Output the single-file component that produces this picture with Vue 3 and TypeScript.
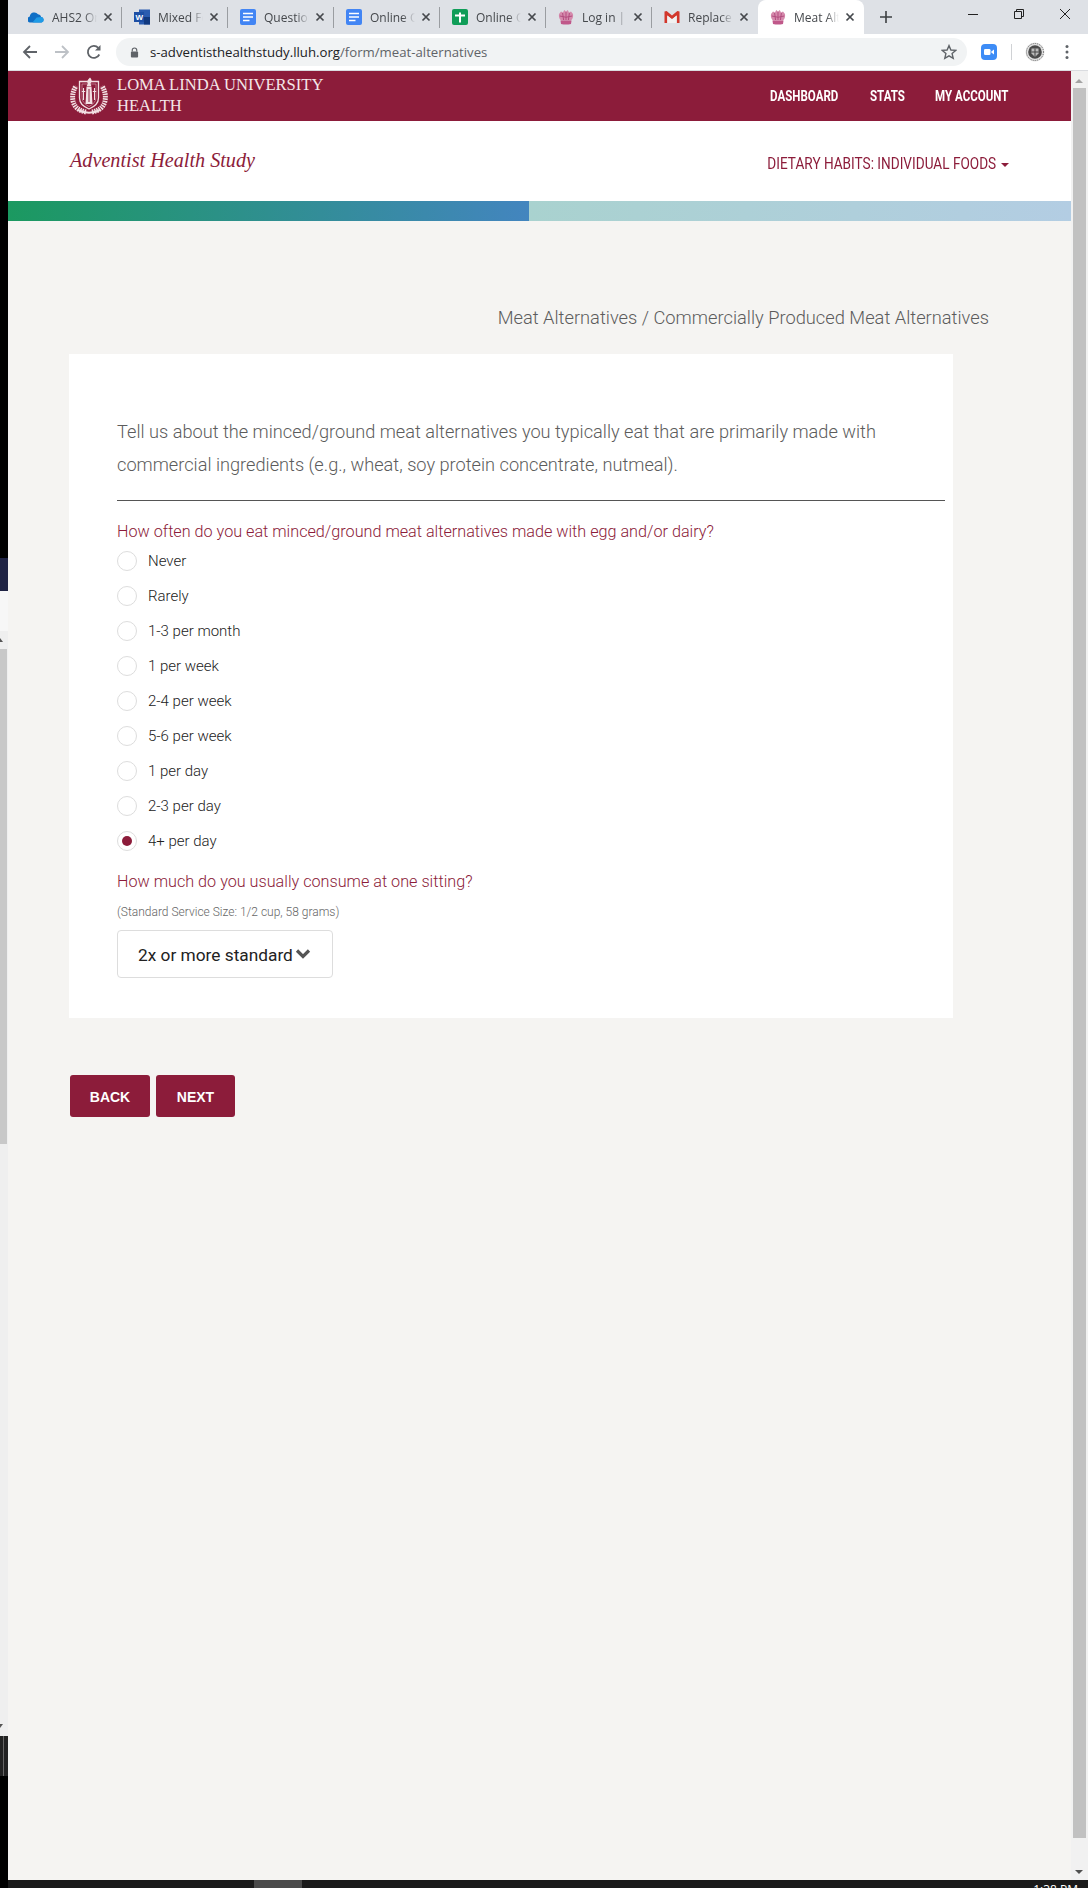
<script setup lang="ts">
interface Tab {
  icon: string;
  title: string;
  active?: boolean;
}

const tabs: Tab[] = [
  { icon: 'onedrive', title: 'AHS2 Online' },
  { icon: 'word', title: 'Mixed Foods' },
  { icon: 'docs', title: 'Questions' },
  { icon: 'docs', title: 'Online Question' },
  { icon: 'sheets', title: 'Online Question' },
  { icon: 'crown', title: 'Log in | Adventist' },
  { icon: 'gmail', title: 'Replace Text' },
  { icon: 'crown', title: 'Meat Alternatives', active: true },
];

const frequencies = [
  'Never',
  'Rarely',
  '1-3 per month',
  '1 per week',
  '2-4 per week',
  '5-6 per week',
  '1 per day',
  '2-3 per day',
  '4+ per day',
];
const selected = '4+ per day';
</script>

<template>
  <div class="screen">
    <div class="edge">
      <div class="edge__black"></div>
      <div class="edge__navy"></div>
      <div class="edge__white"></div>
      <div class="edge__bar">
        <div class="edge__thumb"></div>
      </div>
      <div class="edge__dark"></div>
      <div class="edge__rest"></div>
    </div>

    <div class="window">
      <!-- Tab strip -->
      <div class="tabstrip">
        <div
          v-for="(tab, i) in tabs"
          :key="i"
          class="tab"
          :class="{ 'tab--active': tab.active, 'tab--sep': i < 6 }"
        >
          <svg class="tab__icon" viewBox="0 0 16 16">
            <template v-if="tab.icon === 'onedrive'">
              <path d="M2 13.5 A3 3 0 0 1 1.8 7.6 A4.6 4.6 0 0 1 10 5.2 A3.6 3.6 0 0 1 13.2 8 A2.8 2.8 0 0 1 13.5 13.5 Z" fill="#0f6fc6" />
              <path d="M4.5 13.5 L8.6 8.6 L13.2 8 A2.8 2.8 0 0 1 13.5 13.5 Z" fill="#1f9be6" />
            </template>
            <template v-else-if="tab.icon === 'word'">
              <rect x="5" y="0.5" width="11" height="15" fill="#2b5cb0" />
              <rect x="10" y="8" width="6" height="7.5" fill="#123a80" />
              <rect x="0" y="3" width="10" height="10" fill="#1d4fa5" />
              <text x="1.4" y="11" class="tab__w">W</text>
            </template>
            <template v-else-if="tab.icon === 'docs'">
              <rect x="0" y="0" width="16" height="16" rx="2" fill="#4285f4" />
              <path d="M3 4.5h10M3 8h10M3 11.5h6.5" stroke="#fff" stroke-width="1.7" />
            </template>
            <template v-else-if="tab.icon === 'sheets'">
              <rect x="0" y="0" width="16" height="16" rx="2" fill="#0f9d58" />
              <path d="M3 6.5h10M8 3.5v10" stroke="#fff" stroke-width="2" />
            </template>
            <template v-else-if="tab.icon === 'crown'">
              <path d="M1 5 L3 2.5 L5 3.5 L6.2 1 L8 2.5 L9.8 1 L11 3.5 L13 2.5 L15 5 Q15.6 9 13 11.5 H3 Q0.4 9 1 5 Z" fill="#d58aac" />
              <path d="M8 3v8M4.6 4 5.6 11M11.4 4 10.4 11M1.8 7 Q8 9.5 14.2 7" stroke="#b34c7e" fill="none" />
              <path d="M2.5 11.5 H13.5 L13 15 Q8 16 3 15 Z" fill="#c0588a" />
            </template>
            <template v-else>
              <path d="M0.5 14 V2.5 L2.6 2 L8 6.5 L13.4 2 L15.5 2.5 V14 H12.7 V6.5 L8 10.2 L3.3 6.5 V14 Z" fill="#d2372c" />
              <path d="M3.3 14 V6.5 L8 10.2 L12.7 6.5 V14" fill="#f1f1f1" />
            </template>
          </svg>
          <span class="tab__title">{{ tab.title }}</span>
          <svg class="tab__close" viewBox="0 0 10 10">
            <path d="M1.5 1.5 L8.5 8.5 M8.5 1.5 L1.5 8.5" stroke="#45484c" stroke-width="1.7" />
          </svg>
        </div>
        <svg class="newtab" viewBox="0 0 12 12">
          <path d="M6 0v12M0 6h12" stroke="#3c4043" stroke-width="1.6" />
        </svg>
        <div class="winctl">
          <svg viewBox="0 0 12 12"><path d="M1 6.5h10" stroke="#222" /></svg>
          <svg viewBox="0 0 12 12"><path d="M3.5 3 V1.5 H10.5 V8.5 H9 M1.5 3.5 H8.5 V10.5 H1.5 Z" stroke="#222" fill="none" /></svg>
          <svg viewBox="0 0 12 12"><path d="M1 1 L11 11 M11 1 L1 11" stroke="#222" /></svg>
        </div>
      </div>

      <!-- Toolbar -->
      <div class="toolbar">
        <svg class="tool" viewBox="0 0 16 16"><path d="M15 8H2M8 2 2 8l6 6" fill="none" stroke="#5f6368" stroke-width="1.8" /></svg>
        <svg class="tool" viewBox="0 0 16 16"><path d="M1 8h13M8 2l6 6-6 6" fill="none" stroke="#bdc1c6" stroke-width="1.8" /></svg>
        <svg class="tool" viewBox="0 0 16 16"><path d="M13.3 10.5 A6 6 0 1 1 12.3 3.8" fill="none" stroke="#5f6368" stroke-width="1.8" /><path d="M14.5 1v5.6H9z" fill="#5f6368" /></svg>
        <div class="omnibox">
          <svg class="omnibox__lock" viewBox="0 0 10 12"><path d="M2.5 5V3.5a2.5 2.5 0 0 1 5 0V5" fill="none" stroke="#5f6368" stroke-width="1.3" /><rect x="1" y="5" width="8" height="6.5" rx="1" fill="#5f6368" /></svg>
          <span class="omnibox__url">s-adventisthealthstudy.lluh.org<span class="omnibox__path">/form/meat-alternatives</span></span>
          <svg class="omnibox__star" viewBox="0 0 16 16"><path d="M8 1.6 9.9 6l4.8.4-3.6 3.2 1.1 4.7L8 11.8l-4.2 2.5 1.1-4.7L1.3 6.4 6.1 6z" fill="none" stroke="#5f6368" stroke-width="1.4" /></svg>
        </div>
        <svg class="zoomapp" viewBox="0 0 16 16"><rect width="16" height="16" rx="4" fill="#3d8cf6" /><rect x="3" y="5" width="6.5" height="6" rx="1.3" fill="#fff" /><path d="M10.3 7.6 13 5.5v5l-2.7-2.1z" fill="#fff" /></svg>
        <div class="toolbar__sep"></div>
        <svg class="avatar" viewBox="0 0 20 20"><circle cx="10" cy="10" r="9.5" fill="#e2e2e2" /><circle cx="10" cy="10" r="8.5" fill="none" stroke="#666" stroke-dasharray="1 1" /><circle cx="10" cy="10" r="6.8" fill="#4a4a4a" /><path d="M6.5 6.5h7v5L10 15l-3.5-3.5z" fill="#bcbcbc" /><path d="M10 6.5V15M6.5 10h7" stroke="#444" /></svg>
        <svg class="dots" viewBox="0 0 4 16"><circle cx="2" cy="2.5" r="1.5" fill="#5f6368" /><circle cx="2" cy="8" r="1.5" fill="#5f6368" /><circle cx="2" cy="13.5" r="1.5" fill="#5f6368" /></svg>
      </div>

      <div class="viewport">
        <div class="page">
          <!-- Top nav -->
          <header class="topnav">
            <div class="brand">
              <svg class="brand__seal" viewBox="0 0 40 38">
                <!-- laurel -->
                <path d="M17 35 Q6 33 4 24 Q2.5 16 7 9" fill="none" stroke="#f2e0e3" stroke-width="5" stroke-dasharray="1.6 0.8" />
                <path d="M23 35 Q34 33 36 24 Q37.5 16 33 9" fill="none" stroke="#f2e0e3" stroke-width="5" stroke-dasharray="1.6 0.8" />
                <!-- shield -->
                <path d="M10.5 4.5 H29.5 V21 Q29.5 28 20 32 Q10.5 28 10.5 21 Z" fill="#8c1c3a" stroke="#f2e0e3" stroke-width="1.3" />
                <path d="M13 7 H27 V20.5 Q27 26 20 29.5 Q13 26 13 20.5 Z" fill="none" stroke="#d9aab6" stroke-width="0.6" />
                <!-- pillar and crosses -->
                <path d="M17.5 10 H22.5 L23.5 27 H16.5 Z" fill="#f2e0e3" />
                <path d="M20 12 V25" stroke="#8c1c3a" stroke-width="1" />
                <path d="M14.5 11 V23 M12.8 14.5 H16.2 M25.5 11 V23 M23.8 14.5 H27.2" stroke="#f2e0e3" stroke-width="1.1" />
                <path d="M21 0.5 Q24 3.5 21.5 6.5 L22.5 9.5 H17.5 L18.8 6.5 Q17 4 21 0.5 Z" fill="#f2e0e3" />
                <!-- ribbon -->
                <path d="M9 33 Q20 38.5 31 33" fill="none" stroke="#f2e0e3" stroke-width="2.2" />
              </svg>
              <div class="brand__name">LOMA LINDA UNIVERSITY<br />HEALTH</div>
            </div>
            <nav class="topnav__links">
              <a class="link link--dash"><span>DASHBOARD</span></a>
              <a class="link link--stats"><span>STATS</span></a>
              <a class="link link--account"><span>MY ACCOUNT</span></a>
            </nav>
          </header>

          <!-- Study header -->
          <div class="subhead">
            <div class="subhead__title">Adventist Health Study</div>
            <div class="subhead__menu">
              <span class="subhead__label">DIETARY HABITS: INDIVIDUAL FOODS</span>
              <span class="caret"></span>
            </div>
          </div>

          <div class="progress">
            <div class="progress__done"></div>
            <div class="progress__todo"></div>
          </div>

          <main class="content">
            <h2 class="crumb">Meat Alternatives / Commercially Produced Meat Alternatives</h2>

            <section class="card">
              <p class="intro">
                Tell us about the minced/ground meat alternatives you typically eat that are primarily made with
                commercial ingredients (e.g., wheat, soy protein concentrate, nutmeal).
              </p>
              <hr class="rule" />

              <div class="question">How often do you eat minced/ground meat alternatives made with egg and/or dairy?</div>
              <ul class="options">
                <li v-for="f in frequencies" :key="f" class="option">
                  <span class="radio" :class="{ 'radio--on': f === selected }"></span>
                  {{ f }}
                </li>
              </ul>

              <div class="question question--second">How much do you usually consume at one sitting?</div>
              <div class="hint">(Standard Service Size: 1/2 cup, 58 grams)</div>
              <div class="select">
                2x or more standard
                <svg class="select__chevron" viewBox="0 0 16 11"><path d="M2 2.5 8 8.5l6-6" fill="none" stroke="#555" stroke-width="3.2" /></svg>
              </div>
            </section>

            <div class="actions">
              <button class="btn btn--back">BACK</button>
              <button class="btn btn--next">NEXT</button>
            </div>
          </main>
        </div>

        <div class="scrollbar">
          <span class="scrollbar__up"></span>
          <div class="scrollbar__thumb"></div>
          <span class="scrollbar__down"></span>
        </div>
      </div>

      <div class="taskbar">
        <div class="taskbar__active"></div>
        <span class="taskbar__clock">1:38 PM</span>
      </div>
    </div>
  </div>
</template>

<style scoped>
.screen {
  display: flex;
  width: 1088px;
  height: 1888px;
  overflow: hidden;
  font-family: "Open Sans", sans-serif;
}

/* Sliver of the window behind, down the left edge */
.edge {
  width: 8px;
  flex: none;
  display: flex;
  flex-direction: column;
  background: #000;
}
.edge__black { height: 558px; background: #000; }
.edge__navy { height: 33px; background: #1f2344; }
.edge__white { height: 40px; background: #f7f7f7; }
.edge__bar {
  position: relative;
  height: 1087px;
  padding-top: 18px;
  background: #efefef;
}
/* the two scroll arrows, mostly hidden behind the browser */
.edge__bar::before,
.edge__bar::after {
  content: "";
  position: absolute;
  left: 0;
  width: 0;
  height: 0;
  border-right: 3px solid transparent;
}
.edge__bar::before { top: 7px; border-bottom: 4px solid #555; }
.edge__bar::after { bottom: 8px; border-top: 4px solid #555; }
.edge__thumb { width: 7px; height: 495px; background: #c8c8c8; }
.edge__dark {
  height: 40px;
  background: #222;
  border-left: 3px solid #222;
  box-shadow: inset 1px 0 0 #666;
}
.edge__rest { flex: 1; background: #000; }

.window {
  flex: 1;
  min-width: 0;
  display: flex;
  flex-direction: column;
}

/* Browser chrome */
.tabstrip {
  position: relative;
  height: 34px;
  flex: none;
  display: flex;
  padding-left: 8px;
  background: #dee1e6;
}
.tab {
  position: relative;
  box-sizing: border-box;
  width: 106px;
  display: flex;
  align-items: center;
  padding: 0 9px 0 12px;
  font-size: 12px;
  color: #45484c;
}
.tab--sep::after {
  content: "";
  position: absolute;
  right: 0;
  top: 7px;
  height: 21px;
  width: 1px;
  background: #9a9da1;
}
.tab--active {
  background: #fff;
  border-radius: 8px 8px 0 0;
}
.tab__icon { width: 16px; height: 16px; flex: none; }
.tab__w {
  font-family: "Liberation Sans", sans-serif;
  font-size: 8px;
  font-weight: 700;
  fill: #fff;
}
.tab__title {
  flex: 1;
  margin: 0 6px 0 8px;
  white-space: nowrap;
  overflow: hidden;
  -webkit-mask-image: linear-gradient(to right, #000 72%, transparent);
  mask-image: linear-gradient(to right, #000 72%, transparent);
}
.tab__close { width: 10px; height: 10px; flex: none; }
.newtab { width: 12px; height: 12px; margin: 11px 0 0 16px; }
.winctl {
  position: absolute;
  right: 17px;
  top: 8px;
  display: flex;
  gap: 34px;
}
.winctl svg { width: 12px; height: 12px; display: block; }

.toolbar {
  height: 37px;
  flex: none;
  box-sizing: border-box;
  display: flex;
  align-items: center;
  padding: 0 0 0 14px;
  background: #fff;
  border-bottom: 1px solid #dadce0;
}
.tool { width: 16px; height: 16px; margin-right: 16px; flex: none; }
.omnibox {
  width: 851px;
  height: 28px;
  flex: none;
  margin-left: -2px;
  box-sizing: border-box;
  display: flex;
  align-items: center;
  padding: 0 10px 0 14px;
  border-radius: 14px;
  background: #f1f3f4;
}
.omnibox__lock { width: 9px; height: 11px; flex: none; }
.omnibox__url {
  flex: 1;
  margin-left: 11px;
  font-size: 13.2px;
  color: #202124;
}
.omnibox__path { color: #5f6368; }
.omnibox__star { width: 16px; height: 16px; }
.zoomapp { width: 16px; height: 16px; margin-left: 14px; flex: none; }
.toolbar__sep { width: 1px; height: 16px; margin-left: 14px; background: #d0d2d5; }
.avatar { width: 20px; height: 20px; margin-left: 13px; flex: none; }
.dots { width: 4px; height: 16px; margin-left: 20px; flex: none; }

.viewport {
  flex: 1;
  min-height: 0;
  display: flex;
}
.page {
  flex: 1;
  min-width: 0;
  background: #f5f4f2;
}

/* Site header */
.topnav {
  height: 50px;
  display: flex;
  align-items: center;
  justify-content: space-between;
  padding: 0 62px 0 61px;
  background: #8c1c3a;
}
.brand { display: flex; align-items: center; gap: 8px; }
.brand__seal { width: 40px; height: 38px; flex: none; }
.brand__name {
  padding-bottom: 2px;
  font-family: "Liberation Serif", serif;
  font-size: 16.6px;
  line-height: 21px;
  color: #f4e6e9;
}
.topnav__links {
  display: flex;
  gap: 31px;
  font-family: Roboto, sans-serif;
  font-size: 15px;
  font-weight: 700;
  color: #fff;
}
/* no condensed face is installed, so the site's narrow caps are squeezed */
.link { display: block; white-space: nowrap; }
.link span { display: inline-block; transform: scaleX(0.77); transform-origin: left center; }
.link--dash { width: 69px; }
.link--stats { width: 34px; }
.link--account { width: 74px; }
.subhead {
  height: 80px;
  box-sizing: border-box;
  display: flex;
  align-items: center;
  justify-content: space-between;
  padding: 0 62px 0 62px;
  background: #fff;
}
.subhead__title {
  padding-bottom: 1px;
  font-family: "Liberation Serif", serif;
  font-size: 20.2px;
  font-style: italic;
  color: #8c1c3a;
}
.subhead__menu {
  padding-top: 5px;
  font-family: Roboto, sans-serif;
  font-size: 16px;
  color: #8c1c3a;
}
.subhead__label {
  display: inline-block;
  transform: scaleX(0.85);
  transform-origin: right center;
}
.caret {
  display: inline-block;
  margin-left: 5px;
  vertical-align: 2px;
  border-top: 4px solid #8c1c3a;
  border-left: 4px solid transparent;
  border-right: 4px solid transparent;
}
.progress { display: flex; height: 20px; }
.progress__done {
  width: 521px;
  background: linear-gradient(to right, #1b9960, #4385bf);
}
.progress__todo {
  flex: 1;
  background: linear-gradient(to right, #a9d2cf, #b3cde3);
}

/* Form */
.content {
  padding: 84px 82px 0 61px;
  font-family: Roboto, sans-serif;
  font-weight: 300;
}
.crumb {
  margin: 0;
  text-align: right;
  font-size: 18.3px;
  line-height: 26px;
  font-weight: 300;
  color: #5c5c5c;
}
.card {
  width: 884px;
  box-sizing: border-box;
  margin-top: 23px;
  padding: 61px 8px 40px 48px;
  background: #fff;
}
.intro {
  margin: 0;
  max-width: 790px;
  font-size: 18.2px;
  line-height: 33px;
  color: #5c5c5c;
}
.rule {
  height: 1px;
  margin: 19px 0 0;
  border: 0;
  background: #555;
}
.question {
  margin-top: 20px;
  font-size: 16.2px;
  line-height: 22px;
  color: #8c1c3a;
}
.question--second { margin-top: 13px; }
.options {
  margin: 0;
  padding: 0;
  list-style: none;
}
.option {
  display: flex;
  align-items: center;
  gap: 11px;
  height: 35px;
  font-size: 15px;
  color: #222;
}
.radio {
  position: relative;
  box-sizing: border-box;
  width: 20px;
  height: 20px;
  border: 1px solid #ddd;
  border-radius: 50%;
  background: #fff;
}
.radio--on::after {
  content: "";
  position: absolute;
  inset: 4px;
  border-radius: 50%;
  background: #8c1c3a;
}
.hint {
  margin-top: 12px;
  font-size: 12px;
  line-height: 14px;
  color: #666;
}
.select {
  box-sizing: border-box;
  width: 216px;
  height: 48px;
  margin-top: 11px;
  display: flex;
  align-items: center;
  gap: 2px;
  padding: 2px 0 0 20px;
  border: 1px solid #ddd;
  border-radius: 4px;
  font-size: 17.3px;
  font-weight: 400;
  color: #222;
  white-space: nowrap;
}
.select__chevron { width: 16px; height: 11px; flex: none; margin-top: -4px; }
.actions {
  display: flex;
  gap: 6px;
  margin: 57px 0 0 1px;
}
.btn {
  height: 42px;
  padding: 2px 0 0;
  border: 0;
  border-radius: 3px;
  background: #8c1c3a;
  color: #fff;
  font-family: "Liberation Sans", sans-serif;
  font-size: 14px;
  font-weight: 700;
}
.btn--back { width: 80px; }
.btn--next { width: 79px; }

/* Scrollbar */
.scrollbar {
  position: relative;
  width: 17px;
  flex: none;
  box-sizing: border-box;
  padding: 17px 2px;
  background: #f1f1f1;
}
.scrollbar__thumb { height: 1750px; background: #c1c1c1; }
.scrollbar__up,
.scrollbar__down {
  position: absolute;
  left: 4px;
  border-left: 4px solid transparent;
  border-right: 4px solid transparent;
}
.scrollbar__up { top: 8px; border-bottom: 4px solid #a3a3a3; }
.scrollbar__down { bottom: 6px; border-top: 4px solid #505050; }

.taskbar {
  position: relative;
  height: 8px;
  flex: none;
  overflow: hidden;
  background: #1a1a1a;
}
.taskbar__active { width: 48px; height: 8px; margin-left: 246px; background: #4a4a4a; }
.taskbar__clock {
  position: absolute;
  right: 10px;
  top: 3px;
  font-family: "Open Sans", sans-serif;
  font-size: 12px;
  line-height: 14px;
  color: #fff;
}
</style>

<style>
body { background: #000; }
</style>
